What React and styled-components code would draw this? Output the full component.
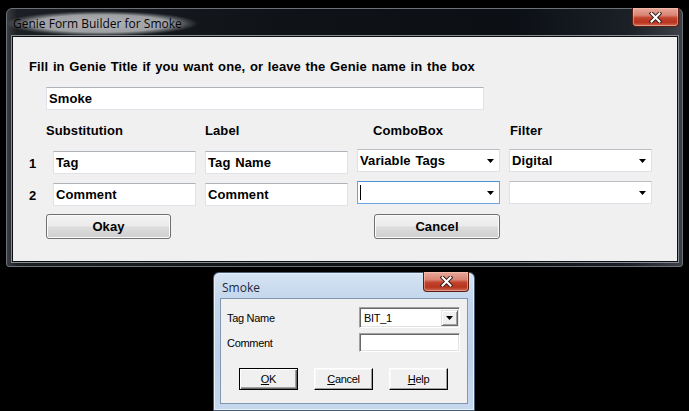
import React from "react";
import styled, { createGlobalStyle } from "styled-components";

const GlobalStyle = createGlobalStyle`
    html, body {
        margin: 0;
        padding: 0;
        background: #000;
        width: 689px;
        height: 411px;
        overflow: hidden;
    }
`;

const Desktop = styled.div`
    display: flex;
    flex-direction: column;
    align-items: flex-start;
    padding: 8px 0 0 6px;
`;

/* ---------- main (dark glass) window ---------- */

const MainWindow = styled.div`
    box-sizing: border-box;
    width: 677px;
    height: 259px;
    display: flex;
    flex-direction: column;
    border: 1px solid #6c7177;
    border-radius: 6px 6px 3px 3px;
    background: linear-gradient(
        90deg,
        #3a3e43 0px,
        #1c2025 10px,
        #0f1318 40%,
        #0c1015 75%,
        #1b2026 92%,
        #3c4147 100%
    );
`;

const TitleBar = styled.div`
    display: flex;
    align-items: center;
    justify-content: space-between;
    height: ${(props) => props.height}px;
    padding-left: ${(props) => props.pad}px;
    flex-shrink: 0;
`;

const DarkTitle = styled.span`
    margin: 2px 0 0 -8px;
    padding: 4px 16px 4px 8px;
    font-family: "Open Sans", "Noto Sans", sans-serif;
    font-size: 12px;
    color: #050505;
    background: radial-gradient(
        farthest-side,
        rgba(185, 187, 190, 0.95) 0%,
        rgba(172, 174, 177, 0.9) 70%,
        rgba(120, 122, 125, 0.4) 90%,
        rgba(60, 62, 65, 0) 100%
    );
`;

const LightTitle = styled.span`
    margin-top: 3px;
    font-family: "Open Sans", "Noto Sans", sans-serif;
    font-size: 12px;
    color: #1e2a3a;
`;

const CloseButton = styled.div`
    box-sizing: border-box;
    width: ${(props) => props.w}px;
    height: ${(props) => props.h}px;
    align-self: flex-start;
    margin-top: -1px;
    margin-right: ${(props) => props.right}px;
    display: flex;
    align-items: center;
    justify-content: center;
    border: 1px solid #5a1d14;
    border-top: none;
    border-radius: 0 0 4px 4px;
    background: linear-gradient(
        180deg,
        #e9a99b 0%,
        #d98474 40%,
        #c2432d 55%,
        #b8341e 80%,
        #d0705a 100%
    );
    box-shadow: inset 0 0 0 1px rgba(255, 210, 200, 0.45);
`;

const MainClient = styled.div`
    flex: 1;
    box-sizing: border-box;
    margin: 0 4px 4px 5px;
    background: #f0f0f0;
    border: 1px solid #0b0e12;
    box-shadow: 0 0 0 1px #878c92;
    padding: 22px 0 0 16px;
    font-family: "Liberation Sans", Arial, sans-serif;
    font-weight: bold;
    font-size: 13px;
    letter-spacing: 0.1px;
    word-spacing: 1px;
    color: #000;
`;

const Instruction = styled.div`
    line-height: 16px;
    height: 16px;
`;

const TextBox = styled.div`
    box-sizing: border-box;
    width: ${(props) => props.w}px;
    height: 23px;
    line-height: 21px;
    margin-top: ${(props) => props.top || 0}px;
    margin-left: ${(props) => props.left || 0}px;
    padding-left: 2px;
    background: #fff;
    border: 1px solid #e0e4ea;
    border-top-color: #aeb2b9;
    white-space: nowrap;
    overflow: hidden;
`;

const HeaderRow = styled.div`
    display: flex;
    margin-top: 13px;
    padding-left: 17px;
    line-height: 16px;
    height: 16px;
`;

const HeaderCell = styled.div`
    width: ${(props) => props.w}px;
    flex-shrink: 0;
`;

const Rows = styled.div`
    display: grid;
    grid-template-columns: 15px repeat(4, 143px);
    grid-auto-rows: 25px;
    column-gap: 9px;
    row-gap: 7px;
    margin-top: 10px;
`;

const RowNumber = styled.div`
    line-height: 25px;
    padding-top: 2px;
`;

const Combo = styled.div`
    box-sizing: border-box;
    height: 23px;
    display: flex;
    align-items: center;
    justify-content: space-between;
    padding: 0 5px 0 2px;
    background: #fff;
    border: 1px solid ${(props) => (props.focused ? "#6aa6e2" : "#dde2e8")};
    border-top-color: ${(props) => (props.focused ? "#4d8fd6" : "#b9bdc4")};
    white-space: nowrap;
`;

const Caret = styled.span`
    display: inline-block;
    width: 1px;
    height: 15px;
    background: #000;
`;

const ButtonRow = styled.div`
    display: flex;
    margin-top: 8px;
    padding-left: 17px;
`;

const AeroButton = styled.div`
    box-sizing: border-box;
    width: ${(props) => props.w}px;
    height: 25px;
    margin-left: ${(props) => props.left || 0}px;
    display: flex;
    align-items: center;
    justify-content: center;
    border: 1px solid #707070;
    border-radius: 3px;
    background: linear-gradient(
        180deg,
        #f3f3f3 0%,
        #ebebeb 48%,
        #dddddd 52%,
        #cfcfcf 100%
    );
    box-shadow: inset 0 0 0 1px #fbfbfb;
`;

/* ---------- small (light aero basic) window ---------- */

const SmallWindow = styled.div`
    box-sizing: border-box;
    width: 262px;
    height: 139px;
    margin: 5px 0 0 207px;
    display: flex;
    flex-direction: column;
    border: 1px solid #4b5d74;
    border-radius: 6px 6px 0 0;
    background: linear-gradient(
        180deg,
        #d5e3f3 0%,
        #c3d6ec 20%,
        #bcd1e9 60%,
        #c6d8ed 100%
    );
    box-shadow: inset 0 0 0 1px #e6eef8;
`;

const SmallClient = styled.div`
    flex: 1;
    box-sizing: border-box;
    margin: 0 6px 6px 6px;
    background: #f0f0f0;
    border: 1px solid #8196b0;
    padding: 8px 0 0 6px;
    font-family: "Liberation Sans", Arial, sans-serif;
    font-size: 11px;
    letter-spacing: -0.3px;
    color: #000;
`;

const FieldGrid = styled.div`
    display: grid;
    grid-template-columns: 132px 101px;
    row-gap: 5px;
    align-items: center;
`;

const SunkenBox = styled.div`
    box-sizing: border-box;
    height: ${(props) => props.h}px;
    display: flex;
    align-items: center;
    justify-content: space-between;
    padding-left: 4px;
    background: #fff;
    border: 1px solid;
    border-color: #a0a0a0 #ffffff #ffffff #a0a0a0;
    box-shadow: inset 1px 1px 0 #696969, inset -1px -1px 0 #e3e3e3;
`;

const DropButton = styled.div`
    box-sizing: border-box;
    width: 17px;
    height: 16px;
    margin-right: 1px;
    display: flex;
    align-items: center;
    justify-content: center;
    background: #f0f0f0;
    border: 1px solid;
    border-color: #e3e3e3 #696969 #696969 #e3e3e3;
    box-shadow: inset 1px 1px 0 #fff, inset -1px -1px 0 #a0a0a0;
`;

const ClassicButtons = styled.div`
    display: flex;
    gap: 16px;
    margin: 16px 0 0 12px;
`;

const ClassicButton = styled.div`
    box-sizing: border-box;
    width: 59px;
    height: 22px;
    display: flex;
    align-items: center;
    justify-content: center;
    background: #f0f0f0;
    border: 1px solid ${(props) => (props.primary ? "#000" : "#fff")};
    border-right-color: #000;
    border-bottom-color: #000;
    box-shadow: ${(props) =>
        props.primary
            ? "inset 1px 1px 0 #fff, inset -1px -1px 0 #696969, inset -2px -2px 0 #a0a0a0"
            : "inset -1px -1px 0 #a0a0a0, inset 1px 1px 0 #f8f8f8"};
`;

function CloseGlyph() {
    return (
        <svg width="13" height="11" viewBox="0 0 13 11">
            <path
                d="M2.5 1.5 L10.5 9.5 M10.5 1.5 L2.5 9.5"
                stroke="#3b1d18"
                strokeWidth="4"
                strokeLinecap="square"
            />
            <path
                d="M2.5 1.5 L10.5 9.5 M10.5 1.5 L2.5 9.5"
                stroke="#fff"
                strokeWidth="2"
                strokeLinecap="square"
            />
        </svg>
    );
}

function Arrow() {
    return (
        <svg width="7" height="4" viewBox="0 0 7 4">
            <path d="M0 0 H7 L3.5 4 Z" fill="#000" />
        </svg>
    );
}

const rows = [
    { n: "1", sub: "Tag", label: "Tag Name", combo: "Variable Tags", filter: "Digital" },
    { n: "2", sub: "Comment", label: "Comment", combo: "", filter: "", focused: true },
];

export default function App() {
    return (
        <>
            <GlobalStyle />
            <Desktop>
                <MainWindow>
                    <TitleBar height={27} pad={6}>
                        <DarkTitle>Genie Form Builder for Smoke</DarkTitle>
                        <CloseButton w={47} h={19} right={3}>
                            <CloseGlyph />
                        </CloseButton>
                    </TitleBar>
                    <MainClient>
                        <Instruction>
                            Fill in Genie Title if you want one, or leave the
                            Genie name in the box
                        </Instruction>
                        <TextBox w={438} top={12} left={17}>
                            Smoke
                        </TextBox>
                        <HeaderRow>
                            <HeaderCell w={159}>Substitution</HeaderCell>
                            <HeaderCell w={168}>Label</HeaderCell>
                            <HeaderCell w={137}>ComboBox</HeaderCell>
                            <HeaderCell w={100}>Filter</HeaderCell>
                        </HeaderRow>
                        <Rows>
                            {rows.map((r) => (
                                <React.Fragment key={r.n}>
                                    <RowNumber>{r.n}</RowNumber>
                                    <TextBox w={143} top={2}>
                                        {r.sub}
                                    </TextBox>
                                    <TextBox w={143} top={2}>
                                        {r.label}
                                    </TextBox>
                                    <Combo focused={r.focused}>
                                        {r.focused ? <Caret /> : <span>{r.combo}</span>}
                                        <Arrow />
                                    </Combo>
                                    <Combo>
                                        <span>{r.filter}</span>
                                        <Arrow />
                                    </Combo>
                                </React.Fragment>
                            ))}
                        </Rows>
                        <ButtonRow>
                            <AeroButton w={125}>Okay</AeroButton>
                            <AeroButton w={126} left={203}>
                                Cancel
                            </AeroButton>
                        </ButtonRow>
                    </MainClient>
                </MainWindow>

                <SmallWindow>
                    <TitleBar height={25} pad={8}>
                        <LightTitle>Smoke</LightTitle>
                        <CloseButton w={46} h={20} right={5}>
                            <CloseGlyph />
                        </CloseButton>
                    </TitleBar>
                    <SmallClient>
                        <FieldGrid>
                            <span>Tag Name</span>
                            <SunkenBox h={21}>
                                <span>BIT_1</span>
                                <DropButton>
                                    <Arrow />
                                </DropButton>
                            </SunkenBox>
                            <span>Comment</span>
                            <SunkenBox h={19} />
                        </FieldGrid>
                        <ClassicButtons>
                            <ClassicButton primary>
                                <span>
                                    <u>O</u>K
                                </span>
                            </ClassicButton>
                            <ClassicButton>
                                <span>
                                    <u>C</u>ancel
                                </span>
                            </ClassicButton>
                            <ClassicButton>
                                <span>
                                    <u>H</u>elp
                                </span>
                            </ClassicButton>
                        </ClassicButtons>
                    </SmallClient>
                </SmallWindow>
            </Desktop>
        </>
    );
}
